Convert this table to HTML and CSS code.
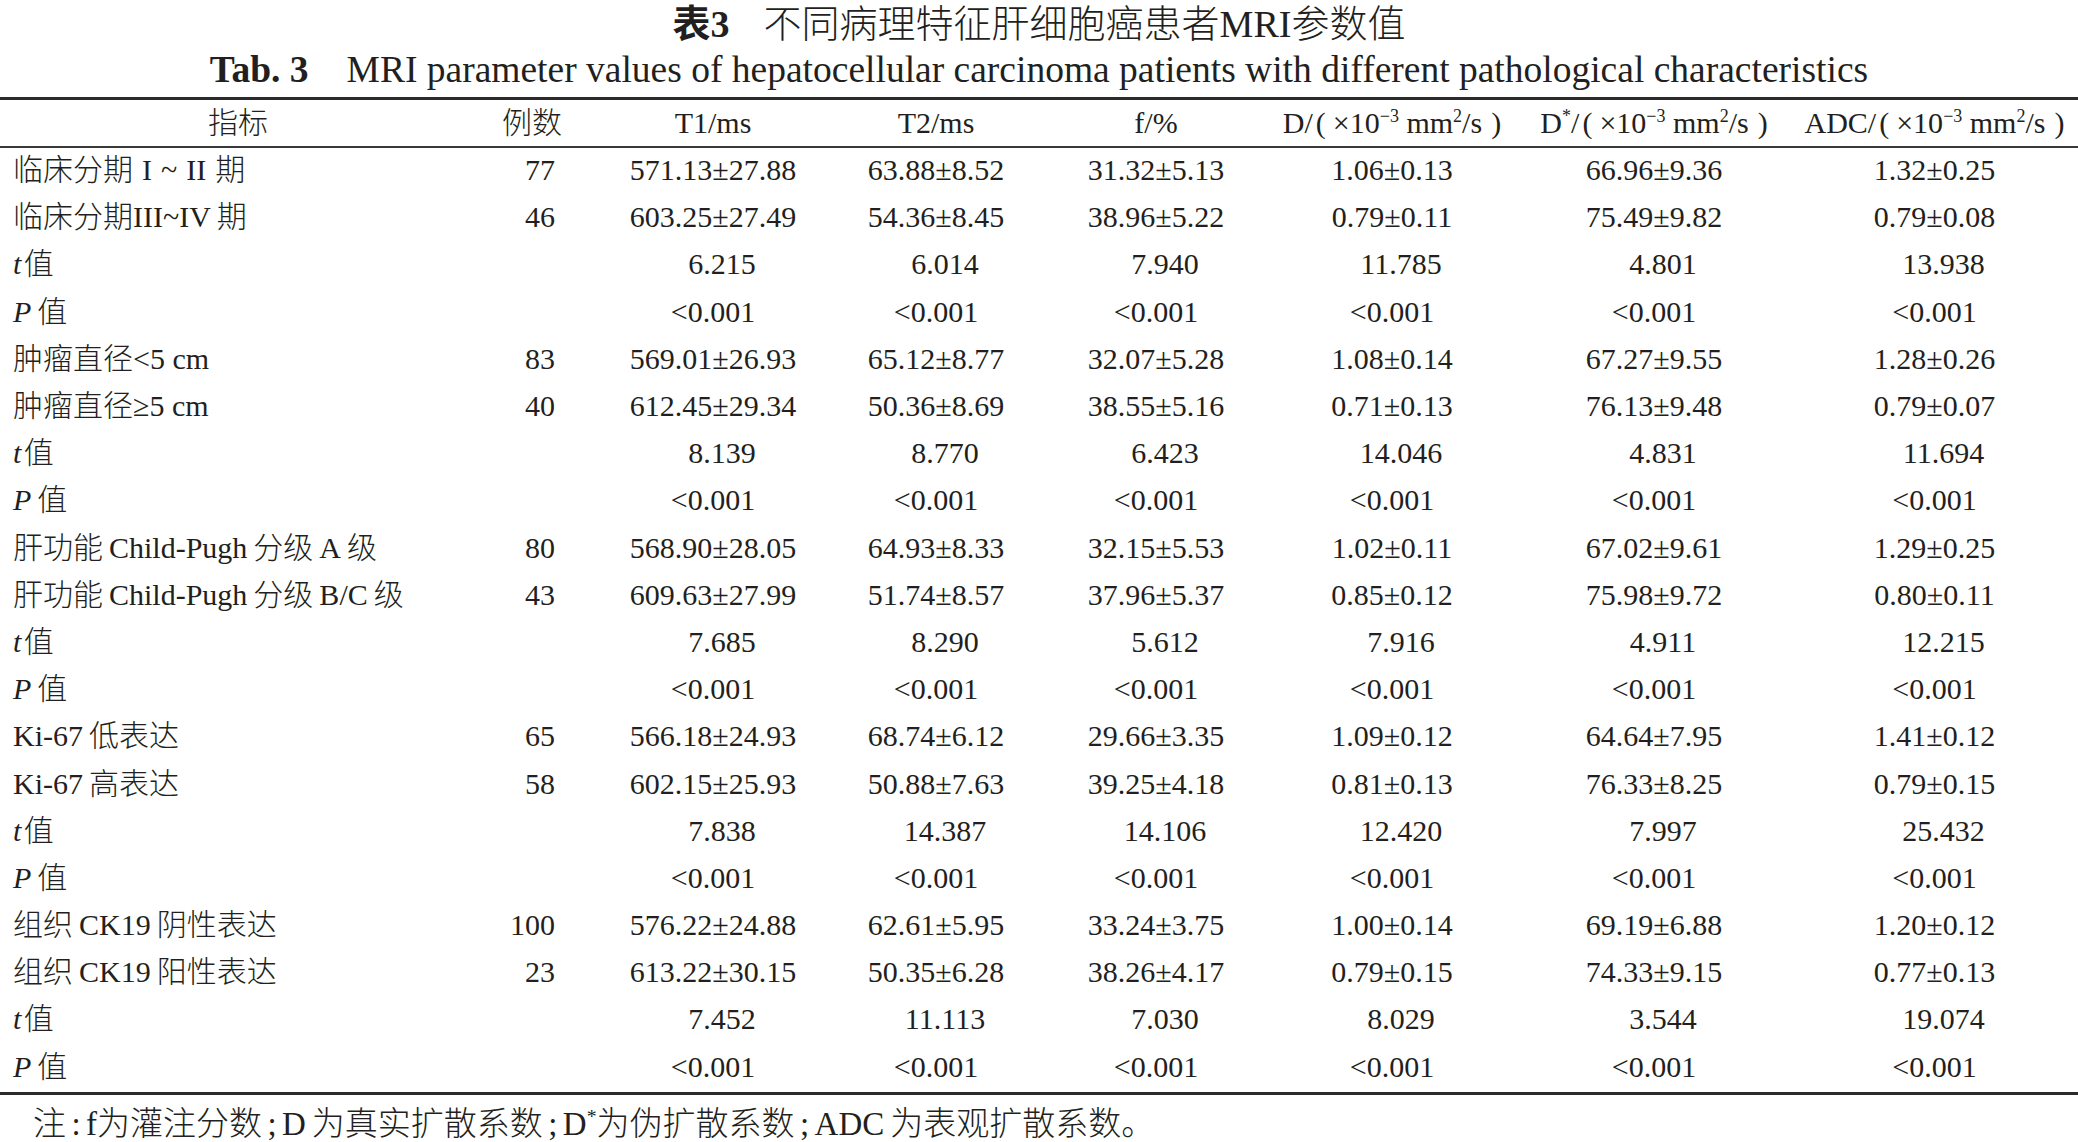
FILE: index.html
```html
<!DOCTYPE html>
<html lang="zh-CN">
<head>
<meta charset="utf-8">
<title>表3 不同病理特征肝细胞癌患者MRI参数值</title>
<link rel="stylesheet" href="styles.css">
</head>
<body>
<div class="page">
  <div class="cap-zh"><b>表3</b><span class="gap1"></span>不同病理特征肝细胞癌患者MRI参数值</div>
  <div class="cap-en"><b>Tab. 3</b><span class="gap2"></span>MRI parameter values of hepatocellular carcinoma patients with different pathological characteristics</div>
  <table class="tbl">
    <colgroup>
      <col class="c1"><col class="c2"><col class="c3"><col class="c4"><col class="c5"><col class="c6"><col class="c7"><col class="c8">
    </colgroup>
    <thead>
      <tr>
        <th class="h1">指标</th>
        <th class="hn">例数</th>
        <th>T1/ms</th>
        <th>T2/ms</th>
        <th>f/%</th>
        <th>D/<span class="pl">(</span>×10<sup>−3</sup> mm<sup>2</sup>/s<span class="pr">)</span></th>
        <th>D<sup>*</sup>/<span class="pl">(</span>×10<sup>−3</sup> mm<sup>2</sup>/s<span class="pr">)</span></th>
        <th>ADC/<span class="pl">(</span>×10<sup>−3</sup> mm<sup>2</sup>/s<span class="pr">)</span></th>
      </tr>
    </thead>
    <tbody>
      <tr><td class="lab">临床分期<span class="sp"></span>I<span class="sp"></span>~<span class="sp"></span>II<span class="sp"></span>期</td><td class="n">77</td><td>571.13±27.88</td><td>63.88±8.52</td><td>31.32±5.13</td><td>1.06±0.13</td><td>66.96±9.36</td><td>1.32±0.25</td></tr>
      <tr><td class="lab">临床分期III~IV&#8201;期</td><td class="n">46</td><td>603.25±27.49</td><td>54.36±8.45</td><td>38.96±5.22</td><td>0.79±0.11</td><td>75.49±9.82</td><td>0.79±0.08</td></tr>
      <tr class="tv"><td class="lab"><i>t</i>&#8202;值</td><td class="n"></td><td>6.215</td><td>6.014</td><td>7.940</td><td>11.785</td><td>4.801</td><td>13.938</td></tr>
      <tr><td class="lab"><i>P</i>&#8201;值</td><td class="n"></td><td>&lt;0.001</td><td>&lt;0.001</td><td>&lt;0.001</td><td>&lt;0.001</td><td>&lt;0.001</td><td>&lt;0.001</td></tr>

      <tr><td class="lab">肿瘤直径&lt;5 cm</td><td class="n">83</td><td>569.01±26.93</td><td>65.12±8.77</td><td>32.07±5.28</td><td>1.08±0.14</td><td>67.27±9.55</td><td>1.28±0.26</td></tr>
      <tr><td class="lab">肿瘤直径≥5 cm</td><td class="n">40</td><td>612.45±29.34</td><td>50.36±8.69</td><td>38.55±5.16</td><td>0.71±0.13</td><td>76.13±9.48</td><td>0.79±0.07</td></tr>
      <tr class="tv"><td class="lab"><i>t</i>&#8202;值</td><td class="n"></td><td>8.139</td><td>8.770</td><td>6.423</td><td>14.046</td><td>4.831</td><td>11.694</td></tr>
      <tr><td class="lab"><i>P</i>&#8201;值</td><td class="n"></td><td>&lt;0.001</td><td>&lt;0.001</td><td>&lt;0.001</td><td>&lt;0.001</td><td>&lt;0.001</td><td>&lt;0.001</td></tr>

      <tr><td class="lab">肝功能&#8201;Child-Pugh&#8201;分级&#8201;A&#8201;级</td><td class="n">80</td><td>568.90±28.05</td><td>64.93±8.33</td><td>32.15±5.53</td><td>1.02±0.11</td><td>67.02±9.61</td><td>1.29±0.25</td></tr>
      <tr><td class="lab">肝功能&#8201;Child-Pugh&#8201;分级&#8201;B/C&#8201;级</td><td class="n">43</td><td>609.63±27.99</td><td>51.74±8.57</td><td>37.96±5.37</td><td>0.85±0.12</td><td>75.98±9.72</td><td>0.80±0.11</td></tr>
      <tr class="tv"><td class="lab"><i>t</i>&#8202;值</td><td class="n"></td><td>7.685</td><td>8.290</td><td>5.612</td><td>7.916</td><td>4.911</td><td>12.215</td></tr>
      <tr><td class="lab"><i>P</i>&#8201;值</td><td class="n"></td><td>&lt;0.001</td><td>&lt;0.001</td><td>&lt;0.001</td><td>&lt;0.001</td><td>&lt;0.001</td><td>&lt;0.001</td></tr>

      <tr><td class="lab">Ki-67&#8201;低表达</td><td class="n">65</td><td>566.18±24.93</td><td>68.74±6.12</td><td>29.66±3.35</td><td>1.09±0.12</td><td>64.64±7.95</td><td>1.41±0.12</td></tr>
      <tr><td class="lab">Ki-67&#8201;高表达</td><td class="n">58</td><td>602.15±25.93</td><td>50.88±7.63</td><td>39.25±4.18</td><td>0.81±0.13</td><td>76.33±8.25</td><td>0.79±0.15</td></tr>
      <tr class="tv"><td class="lab"><i>t</i>&#8202;值</td><td class="n"></td><td>7.838</td><td>14.387</td><td>14.106</td><td>12.420</td><td>7.997</td><td>25.432</td></tr>
      <tr><td class="lab"><i>P</i>&#8201;值</td><td class="n"></td><td>&lt;0.001</td><td>&lt;0.001</td><td>&lt;0.001</td><td>&lt;0.001</td><td>&lt;0.001</td><td>&lt;0.001</td></tr>

      <tr><td class="lab">组织&#8201;CK19&#8201;阴性表达</td><td class="n">100</td><td>576.22±24.88</td><td>62.61±5.95</td><td>33.24±3.75</td><td>1.00±0.14</td><td>69.19±6.88</td><td>1.20±0.12</td></tr>
      <tr><td class="lab">组织&#8201;CK19&#8201;阳性表达</td><td class="n">23</td><td>613.22±30.15</td><td>50.35±6.28</td><td>38.26±4.17</td><td>0.79±0.15</td><td>74.33±9.15</td><td>0.77±0.13</td></tr>
      <tr class="tv"><td class="lab"><i>t</i>&#8202;值</td><td class="n"></td><td>7.452</td><td>11.113</td><td>7.030</td><td>8.029</td><td>3.544</td><td>19.074</td></tr>
      <tr><td class="lab"><i>P</i>&#8201;值</td><td class="n"></td><td>&lt;0.001</td><td>&lt;0.001</td><td>&lt;0.001</td><td>&lt;0.001</td><td>&lt;0.001</td><td>&lt;0.001</td></tr>
    </tbody>
  </table>
  <div class="note">注<span class="pn">:</span>f为灌注分数<span class="pn">;</span>D<span class="sn"></span>为真实扩散系数<span class="pn">;</span>D<sup>*</sup>为伪扩散系数<span class="pn">;</span>ADC<span class="sn"></span>为表观扩散系数。</div>
</div>
</body>
</html>
```

FILE: styles.css
```css
html, body {
  margin: 0;
  padding: 0;
  background: #ffffff;
}

body {
  font-family: "Liberation Serif", "Noto Sans CJK SC", serif;
  font-weight: 300;
  color: #231f20;
}

.page {
  width: 2078px;
  height: 1142px;
  overflow: hidden;
}

.cap-zh {
  height: 46px;
  line-height: 48px;
  font-size: 38px;
  text-align: center;
  white-space: nowrap;
}

.cap-zh b {
  font-weight: 700;
}

.gap1 {
  display: inline-block;
  width: 34px;
}

.cap-en {
  height: 51px;
  line-height: 48px;
  font-size: 37.5px;
  text-align: center;
  white-space: nowrap;
}

.cap-en b {
  font-weight: 700;
}

.gap2 {
  display: inline-block;
  width: 38px;
}

.tbl {
  width: 2078px;
  border-collapse: collapse;
  table-layout: fixed;
  border-top: 3px solid #2b2b2b;
  border-bottom: 3px solid #2b2b2b;
  font-size: 30px;
}

.c1 { width: 476px; }
.c2 { width: 123px; }
.c3 { width: 228px; }
.c4 { width: 218px; }
.c5 { width: 222px; }
.c6 { width: 250px; }
.c7 { width: 274px; }
.c8 { width: 287px; }

.tbl th {
  font-weight: 300;
  height: 46px;
  padding: 0;
  text-align: center;
  white-space: nowrap;
  border-bottom: 2px solid #3a3a3a;
  line-height: 46px;
}

.tbl th.hn {
  text-align: right;
  padding-right: 37px;
}

.tbl sup {
  font-size: 60%;
  line-height: 0;
  vertical-align: 0.6em;
}

.pl {
  margin-left: 3px;
  margin-right: 7px;
}

.pr {
  margin-left: 9px;
}

.sp {
  display: inline-block;
  width: 9px;
}

.tbl td {
  height: 43.2px;
  padding: 0 0 4px 0;
  line-height: 43px;
  text-align: center;
  white-space: nowrap;
}

.tbl td.lab {
  text-align: left;
  padding-left: 13px;
}

.tbl td.n {
  text-align: right;
  padding-right: 44px;
}

.tbl tr.tv td {
  padding-left: 18px;
}

.tbl tr.tv td.lab {
  padding-left: 13px;
}

.tbl tr.tv td.n {
  padding-left: 0;
}

.note {
  height: 50px;
  line-height: 58px;
  font-size: 33px;
  padding-left: 33px;
  white-space: nowrap;
}

.note sup {
  font-size: 60%;
  line-height: 0;
  vertical-align: 0.6em;
}

.pn {
  display: inline-block;
  width: 20px;
  text-align: center;
}

.sn {
  display: inline-block;
  width: 6px;
}
```
